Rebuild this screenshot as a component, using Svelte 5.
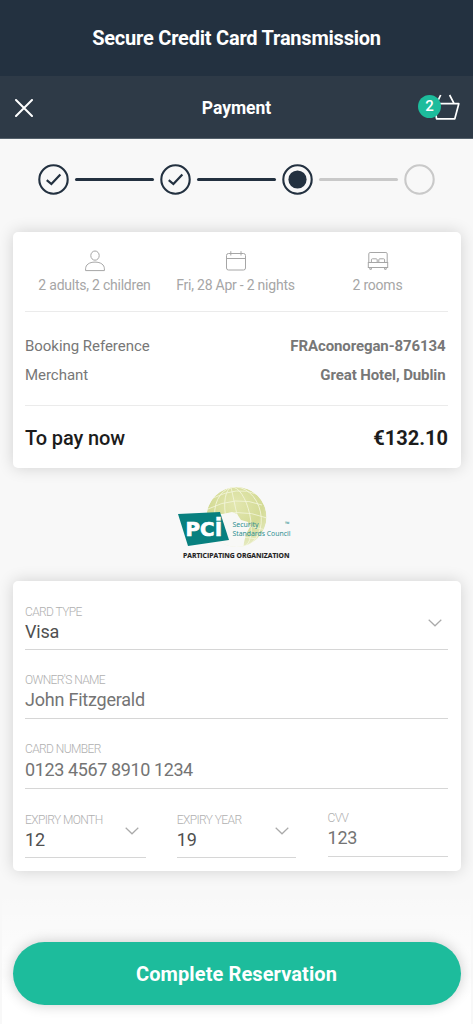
<script lang="ts">
	const steps = ['done', 'done', 'current', 'todo'];
	let basketCount = $state(2);
</script>

<main class="page">
	<header class="title">
		<h1>Secure Credit Card Transmission</h1>
	</header>

	<nav class="bar">
		<button class="close" aria-label="Close">
			<svg width="18" height="18" viewBox="0 0 18 18">
				<path d="M1 1l16 16M17 1L1 17" fill="none" stroke="#fff" stroke-width="2" stroke-linecap="round" />
			</svg>
		</button>
		<h2>Payment</h2>
		<div class="basket">
			<svg width="28" height="27" viewBox="0 0 28 27">
				<path d="M2 9.7H26.8L22.8 24.8H4.6L2 9.7M8.7 1L4.6 9.4M17.6 1l4.4 8.4" fill="none" stroke="#fff" stroke-width="1.7" stroke-linejoin="round" />
			</svg>
			<span class="badge">{basketCount}</span>
		</div>
	</nav>

	<div class="steps">
		{#each steps as step, i}
			{#if i > 0}
				<span class="line" class:off={step === 'todo'}></span>
			{/if}
			<svg class="step" width="31" height="31" viewBox="0 0 31 31">
				<circle cx="15.5" cy="15.5" r="14.2" fill="none" stroke={step === 'todo' ? '#c9c9c9' : '#233140'} stroke-width="2.1" />
				{#if step === 'done'}
					<path d="M9.6 16.8l3.8 3.2 8.2-8.8" fill="none" stroke="#233140" stroke-width="2.2" stroke-linecap="square" />
				{:else if step === 'current'}
					<circle cx="15.5" cy="15.5" r="9.1" fill="#233140" />
				{/if}
			</svg>
		{/each}
	</div>

	<section class="card summary">
		<div class="stay">
			<div class="fact">
				<svg width="22" height="22" viewBox="0 0 22 22" fill="none" stroke="#a6a6a6">
					<ellipse cx="11" cy="5.6" rx="4.2" ry="4.6" />
					<path d="M1.6 20.6v-1.8c0-4 3.6-6.7 9.4-6.7s9.4 2.7 9.4 6.7v1.8z" />
				</svg>
				<span>2 adults, 2 children</span>
			</div>
			<div class="fact">
				<svg width="22" height="22" viewBox="0 0 22 22" fill="none" stroke="#a6a6a6">
					<rect x="1.5" y="3.5" width="19" height="16.5" rx="2" />
					<path d="M1.5 8.5h19M5.8 1.2v4.3M16 1.2v4.3" />
				</svg>
				<span>Fri, 28 Apr - 2 nights</span>
			</div>
			<div class="fact">
				<svg width="22" height="22" viewBox="0 0 22 22" fill="none" stroke="#a6a6a6">
					<path d="M1.8 12.5V3.8c0-.8.6-1.3 1.3-1.3h15.8c.8 0 1.3.5 1.3 1.3v8.7" />
					<path d="M4.4 12.5V9.8c0-.7.4-1 1-1h3.8c.6 0 1 .3 1 1v2.7M11.8 12.5V9.8c0-.7.4-1 1-1h3.8c.6 0 1 .3 1 1v2.7" />
					<rect x="1.3" y="12.5" width="19.4" height="5" />
					<path d="M2.8 17.5v1.8h1.6v-1.8M17.6 17.5v1.8h1.6v-1.8" />
				</svg>
				<span>2 rooms</span>
			</div>
		</div>
		<dl>
			<div><dt>Booking Reference</dt><dd>FRAconoregan-876134</dd></div>
			<div><dt>Merchant</dt><dd>Great Hotel, Dublin</dd></div>
		</dl>
		<div class="total">
			<span>To pay now</span>
			<strong>€132.10</strong>
		</div>
	</section>

	<div class="pci">
		<svg width="140" height="90" viewBox="0 0 140 90">
			<defs>
				<radialGradient id="globe" cx="48%" cy="28%" r="75%">
					<stop offset="0" stop-color="#e3e7b0" />
					<stop offset=".6" stop-color="#d4db96" />
					<stop offset="1" stop-color="#e9edc8" />
				</radialGradient>
				<clipPath id="disc"><circle cx="71.5" cy="37" r="30" /></clipPath>
			</defs>
			<g clip-path="url(#disc)">
				<circle cx="71.5" cy="37" r="30" fill="url(#globe)" />
				<g fill="none" stroke="#f4f6dd" stroke-width=".8">
					<ellipse cx="73" cy="37" rx="12" ry="30" transform="rotate(-12 72 37)" />
					<ellipse cx="73" cy="37" rx="23" ry="30" transform="rotate(-12 72 37)" />
					<path d="M66 7l13 60M48 18q25-12 43-4M43 29q28-14 54-4M41 40q30-14 61-2M43 52q28-12 58-2M52 61q22-6 40-2" />
				</g>
				<path d="M38 34h20l9-2 5 2 4 6 7 2 2 5-4 7-3 13H38z" fill="#f8f8f6" />
			</g>
			<polygon points="13,34 55,32 64,60 23,66" fill="#08807f" />
			<text class="pci-name" x="20.5" y="56" textLength="29" lengthAdjust="spacingAndGlyphs">PC</text>
			<text class="pci-name i" x="49.5" y="56" textLength="8" lengthAdjust="spacingAndGlyphs">i</text>
			<text class="council" x="67.5" y="47" textLength="26" lengthAdjust="spacingAndGlyphs">Security</text>
			<text class="council" x="67.5" y="55.5" textLength="58" lengthAdjust="spacingAndGlyphs">Standards Council</text>
			<text class="tm" x="120" y="46">™</text>
			<text class="org" x="18" y="78" textLength="106.5" lengthAdjust="spacingAndGlyphs">PARTICIPATING ORGANIZATION</text>
		</svg>
	</div>

	{#snippet chevron()}
		<svg class="chevron" width="14" height="8" viewBox="0 0 14 8">
			<path d="M.7.7L7 6.8 13.3.7" fill="none" stroke="#aaa" stroke-width="1.2" />
		</svg>
	{/snippet}

	<section class="card form">
		<div class="field type">
			<span class="label">CARD TYPE</span>
			<span class="value dark">Visa</span>
			{@render chevron()}
		</div>
		<div class="field owner">
			<span class="label">OWNER'S NAME</span>
			<span class="value">John Fitzgerald</span>
		</div>
		<div class="field number">
			<span class="label">CARD NUMBER</span>
			<span class="value digits">0123 4567 8910 1234</span>
		</div>
		<div class="row">
			<div class="field">
				<span class="label">EXPIRY MONTH</span>
				<span class="value dark">12</span>
				{@render chevron()}
			</div>
			<div class="field">
				<span class="label">EXPIRY YEAR</span>
				<span class="value dark">19</span>
				{@render chevron()}
			</div>
			<div class="field cvv">
				<span class="label">CVV</span>
				<span class="value">123</span>
			</div>
		</div>
	</section>

	<footer>
		<button class="submit">Complete Reservation</button>
	</footer>
</main>

<style>
	:global(body) {
		margin: 0;
		background: #f8f8f8;
		font-family: Roboto, "Liberation Sans", sans-serif;
	}
	.page {
		box-sizing: border-box;
		width: 473px;
		height: 1024px;
		overflow: hidden;
		background: #f8f8f8;
	}
	h1,
	h2,
	dl,
	dd {
		margin: 0;
	}
	svg {
		display: block;
	}
	button {
		border: 0;
		padding: 0;
		background: none;
		font-family: inherit;
	}
	.title {
		display: grid;
		place-items: center;
		height: 76px;
		background: #233140;
		color: #fff;
	}
	h1 {
		font-size: 20px;
		font-weight: 700;
		letter-spacing: -.22px;
		line-height: 24px;
	}
	.bar {
		box-sizing: border-box;
		display: grid;
		grid-template-columns: 60px 1fr 60px;
		align-items: center;
		height: 63px;
		border-bottom: 1px solid #54606b;
		background: #2e3a47;
		color: #fff;
		padding: 0 13px 0 15px;
	}
	.close {
		padding-top: 2px;
	}
	h2 {
		padding: 1px 2px 0 0;
		font-size: 17.5px;
		font-weight: 700;
		line-height: 20px;
		text-align: center;
	}
	.basket {
		position: relative;
		justify-self: end;
	}
	.badge {
		position: absolute;
		top: 1px;
		left: -14px;
		width: 23px;
		height: 23px;
		border-radius: 50%;
		background: #1dbc9c;
		font-size: 15px;
		font-weight: 500;
		line-height: 23px;
		text-align: center;
	}
	.steps {
		display: flex;
		align-items: center;
		justify-content: space-between;
		height: 31px;
		padding: 24.5px 37.5px 37.5px;
	}
	.line {
		width: 79px;
		height: 3px;
		border-radius: 2px;
		background: #233140;
	}
	.line.off {
		background: #c9c9c9;
	}
	.card {
		box-sizing: border-box;
		margin: 0 12.5px;
		border-radius: 5px;
		background: #fff;
		box-shadow: 0 0 16px rgba(0, 0, 0, .16);
		padding: 0 12.5px;
	}
	.summary {
		height: 236px;
	}
	.stay {
		box-sizing: border-box;
		display: grid;
		grid-template-columns: 139px 1fr 141px;
		height: 80px;
		border-bottom: 1px solid #ebebeb;
		padding-top: 18px;
	}
	.fact {
		display: flex;
		flex-direction: column;
		align-items: center;
		gap: 5px;
		color: #a6a6a6;
		font-size: 14px;
		letter-spacing: -.23px;
		line-height: 17px;
		white-space: nowrap;
	}
	dl {
		box-sizing: border-box;
		height: 94px;
		border-bottom: 1px solid #ebebeb;
		padding: 20px 2.5px 0 0;
	}
	dl div {
		display: flex;
		justify-content: space-between;
		height: 29px;
		color: #777;
		font-size: 15px;
		letter-spacing: -.04px;
		line-height: 29px;
	}
	dd {
		font-weight: 700;
		letter-spacing: -.1px;
	}
	.total {
		display: flex;
		align-items: center;
		justify-content: space-between;
		height: 64px;
		color: #1c1c1c;
		font-size: 20px;
		font-weight: 500;
		letter-spacing: -.1px;
	}
	.total strong {
		font-weight: 700;
		letter-spacing: 0;
	}
	.pci {
		display: grid;
		justify-content: center;
		height: 101px;
		padding: 12px 3px 0 0;
	}
	.pci-name {
		fill: #fff;
		stroke: #fff;
		stroke-width: .7;
		font-family: "DejaVu Sans", sans-serif;
		font-size: 19px;
		font-weight: 700;
	}
	.pci-name.i {
		stroke-width: .3;
		font-size: 25px;
	}
	.council,
	.tm {
		fill: #2c8f91;
		font-family: "Noto Sans", sans-serif;
		font-size: 7.3px;
	}
	.tm {
		font-size: 6px;
	}
	.org {
		fill: #222;
		stroke: #222;
		stroke-width: .15;
		font-family: "Open Sans", sans-serif;
		font-size: 7px;
		font-weight: 700;
	}
	.form {
		height: 290px;
		padding-top: 23px;
	}
	.field {
		box-sizing: border-box;
		position: relative;
		display: flex;
		flex-direction: column;
		height: 46px;
		border-bottom: 1px solid #d6d6d6;
	}
	.label {
		color: #b0b0b0;
		font-size: 12px;
		font-weight: 300;
		letter-spacing: -.6px;
		line-height: 16px;
	}
	.value {
		color: #747474;
		font-size: 18px;
		letter-spacing: -.22px;
		line-height: 24px;
	}
	.value.dark {
		color: #505050;
	}
	.value.digits {
		letter-spacing: -.39px;
		line-height: 26px;
	}
	.chevron {
		position: absolute;
		top: 15px;
		right: 6.5px;
	}
	.owner {
		height: 47px;
		margin-top: 22px;
	}
	.number {
		height: 48px;
		margin-top: 22px;
	}
	.row {
		display: grid;
		grid-template-columns: 120.5px 119.5px 120.5px;
		justify-content: space-between;
		margin-top: 23px;
	}
	.row .chevron {
		right: 7px;
	}
	.cvv {
		height: 47px;
		margin: -2px 0 1px;
	}
	footer {
		box-sizing: border-box;
		height: 153px;
		background: linear-gradient(rgba(255, 255, 255, 0) 20px, #fff 130px);
		margin: 0 2px;
		padding: 71px 10.5px 0;
	}
	.submit {
		width: 100%;
		height: 63px;
		border-radius: 32px;
		background: #1dbc9c;
		box-shadow: 0 0 14px rgba(0, 0, 0, .2);
		color: #fff;
		font-size: 20px;
		font-weight: 700;
		letter-spacing: .1px;
	}
</style>
